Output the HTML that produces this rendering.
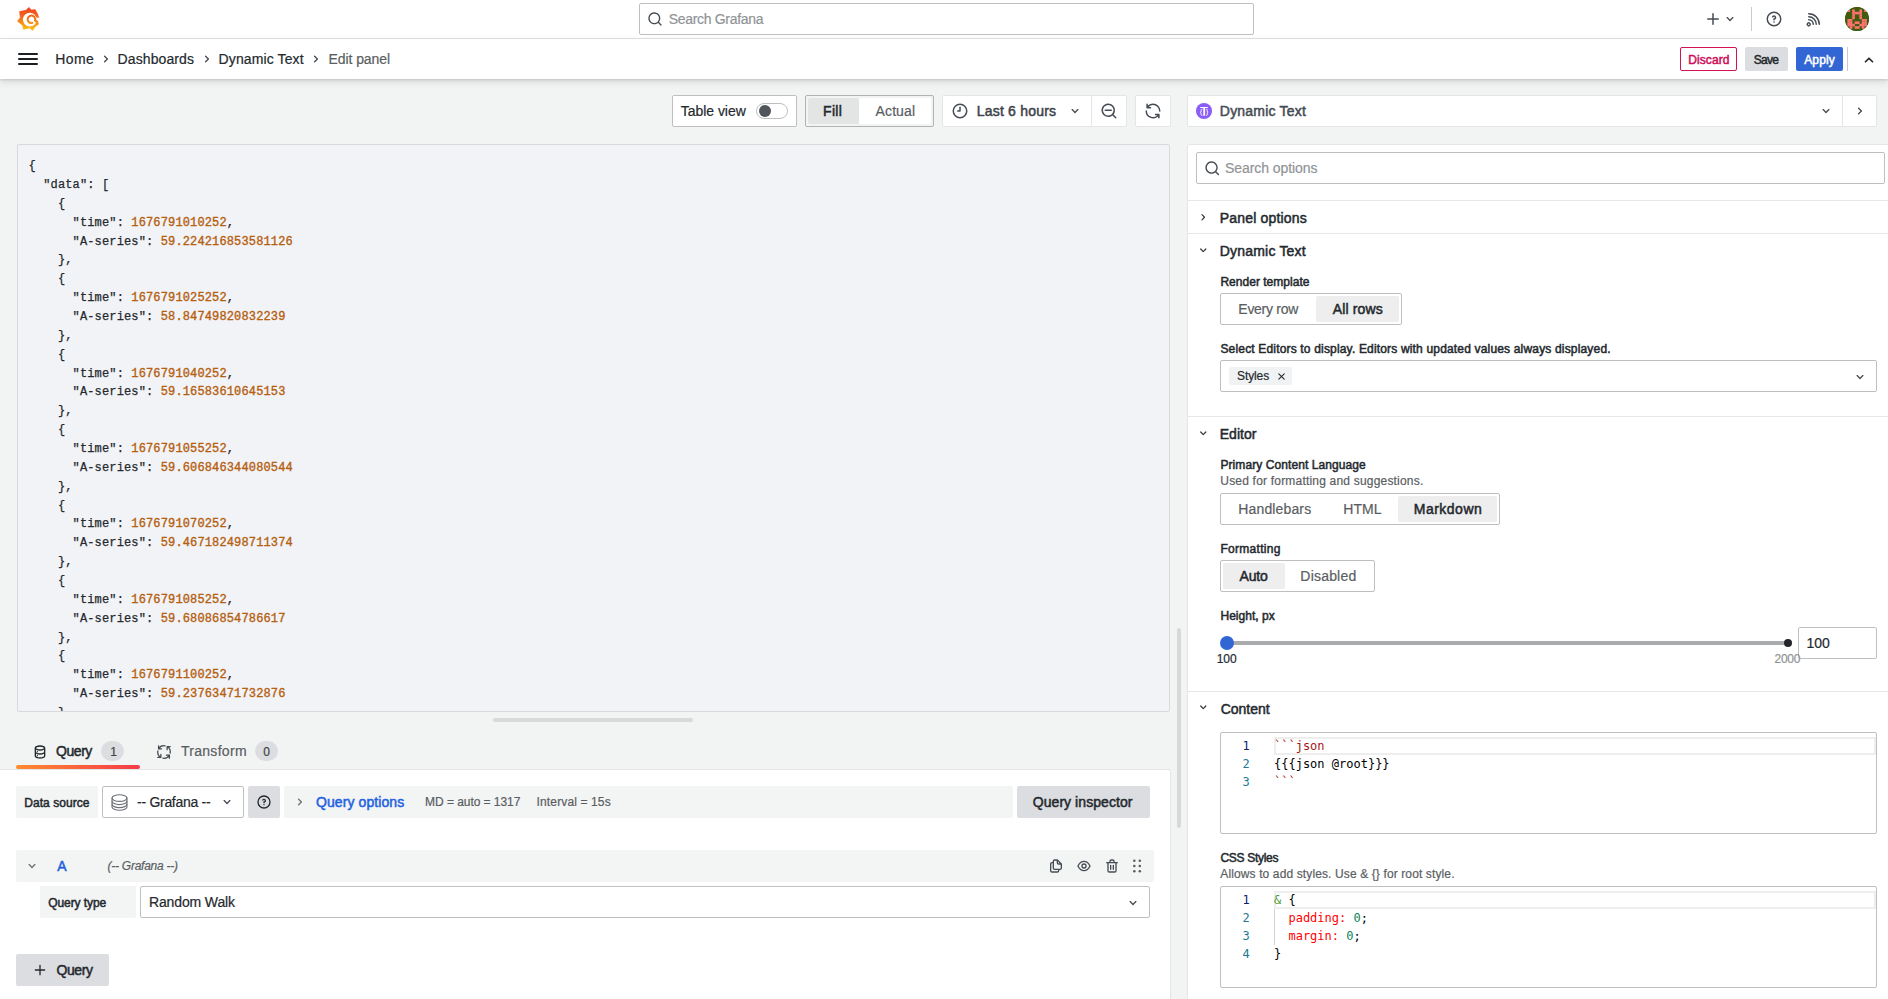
<!DOCTYPE html>
<html lang="en"><head><meta charset="utf-8"><title>Edit panel - Dynamic Text - Dashboards - Grafana</title>
<style>
html,body{margin:0;padding:0}
body{width:1888px;height:999px;overflow:hidden;position:relative;background:#f2f4f4;font-family:'Liberation Sans', sans-serif;color:#24292e}
.a{position:absolute;box-sizing:border-box}
.t{position:absolute;line-height:1;white-space:pre}
.ml{font-family:'Liberation Mono', monospace}
.md{font-family:'DejaVu Sans Mono', 'Liberation Mono', monospace}
svg{position:absolute;overflow:visible}
</style></head>
<body>
<div class="a" style="left:0px;top:0px;width:1888px;height:38px;background:#fff;"></div>
<div class="a" style="left:0px;top:38px;width:1888px;height:1px;background:#e2e3e4;"></div>
<div class="a" style="left:0px;top:39px;width:1888px;height:40px;background:#fff;box-shadow:0 1px 2px rgba(24,26,27,.13),0 3px 7px rgba(24,26,27,.12);"></div>
<svg style="left:16px;top:6px" width="24" height="26" viewBox="0 0 24 26" ><defs><linearGradient id="gl" gradientUnits="userSpaceOnUse" x1="0" y1="1" x2="0" y2="25"><stop offset="0" stop-color="#ee3b1f"/><stop offset=".45" stop-color="#f36f1a"/><stop offset="1" stop-color="#fcc90d"/></linearGradient></defs>
<path fill="url(#gl)" stroke="url(#gl)" stroke-width=".7" stroke-linejoin="round" d="M12.8,1.5 L15.4,3.9 L19.3,3.7 L20.4,5.8 Q22.1,8.2 22.6,11.4 L22.3,12 L21.3,14.8 L22.5,18.3 L19.6,20.2 L16.4,24.5 L13.7,21.8 L7.5,23.4 L6.7,19.4 L1.5,15.2 L4.3,11.6 L3.6,5.6 L10,4.3 Z"/>
<circle cx="13.8" cy="13.6" r="6.9" fill="#fff"/>
<path fill="#fff" d="M20.2,11.2 L23.6,12.3 L23.6,14.2 L20.9,14.9 Z"/>
<path fill="none" stroke="url(#gl)" stroke-width="2" stroke-linecap="round" stroke-linejoin="round" d="M21.3,15.6 L19,14.7 A3.8,3.8 0 1 0 14.7,17.1 L16.4,16.9"/></svg>
<div class="a" style="left:639px;top:3px;width:615px;height:32px;background:#fff;border:1px solid #bdbfc0;border-radius:2px;"></div>
<svg style="left:646.5px;top:10.5px" width="16" height="16" viewBox="0 0 24 24" ><path fill="#464c54" d="M21.71,20.29,18,16.61A9,9,0,1,0,16.61,18l3.68,3.68a1,1,0,0,0,1.42,0A1,1,0,0,0,21.71,20.29ZM11,18a7,7,0,1,1,7-7A7,7,0,0,1,11,18Z"/></svg>
<svg style="left:1704px;top:10px" width="18" height="18" viewBox="0 0 24 24" ><path fill="#464c54" d="M19,11H13V5a1,1,0,0,0-2,0v6H5a1,1,0,0,0,0,2h6v6a1,1,0,0,0,2,0V13h6a1,1,0,0,0,0-2Z"/></svg>
<svg style="left:1722px;top:11px" width="16" height="16" viewBox="0 0 24 24" ><path fill="#464c54" d="M17,9.17a1,1,0,0,0-1.41,0L12,12.71,8.46,9.17a1,1,0,0,0-1.41,0,1,1,0,0,0,0,1.42l4.24,4.24a1,1,0,0,0,1.42,0L17,10.59A1,1,0,0,0,17,9.17Z"/></svg>
<div class="a" style="left:1751px;top:7px;width:1px;height:24px;background:#c9cacb;"></div>
<svg style="left:1765px;top:10px" width="18" height="18" viewBox="0 0 24 24" ><path fill="#464c54" d="M11.29,15.29a1.58,1.58,0,0,0-.12.15.76.76,0,0,0-.09.18.64.64,0,0,0-.06.18,1.36,1.36,0,0,0,0,.2.84.84,0,0,0,.08.38.9.9,0,0,0,.54.54.94.94,0,0,0,.76,0,.9.9,0,0,0,.54-.54A1,1,0,0,0,13,16a1,1,0,0,0-.29-.71A1,1,0,0,0,11.29,15.29ZM12,2A10,10,0,1,0,22,12,10,10,0,0,0,12,2Zm0,18a8,8,0,1,1,8-8A8,8,0,0,1,12,20ZM12,7A3,3,0,0,0,9.4,8.5a1,1,0,1,0,1.73,1A1,1,0,0,1,12,9a1,1,0,0,1,0,2,1,1,0,0,0-1,1v1a1,1,0,0,0,2,0v-.18A3,3,0,0,0,12,7Z"/></svg>
<svg style="left:1804.9px;top:9.5px" width="18" height="18" viewBox="0 0 24 24" ><path fill="#464c54" d="M2.88,16.88a3,3,0,0,0,0,4.24,3,3,0,0,0,4.24,0,3,3,0,0,0-4.24-4.24Zm2.83,2.83a1,1,0,0,1-1.42-1.42,1,1,0,0,1,1.42,0A1,1,0,0,1,5.71,19.71ZM5,12a1,1,0,0,0,0,2,5,5,0,0,1,5,5,1,1,0,0,0,2,0,7,7,0,0,0-7-7ZM5,8a1,1,0,0,0,0,2,9,9,0,0,1,9,9,1,1,0,0,0,2,0,11.08,11.08,0,0,0-3.22-7.78A11.08,11.08,0,0,0,5,8Zm10.61.39A15.11,15.11,0,0,0,5,4,1,1,0,0,0,5,6,13,13,0,0,1,18,19a1,1,0,0,0,2,0A15.11,15.11,0,0,0,15.61,8.39Z"/></svg>
<svg style="left:1845px;top:7px" width="24" height="24" viewBox="0 0 24 24" ><defs><clipPath id="avc"><circle cx="12" cy="12" r="12"/></clipPath><filter id="avb" x="-5%" y="-5%" width="110%" height="110%"><feGaussianBlur stdDeviation="0.35"/></filter></defs><g clip-path="url(#avc)"><rect width="24" height="24" fill="#3f5c0b"/><g filter="url(#avb)"><rect x="-2" y="-2" width="28" height="28" fill="#3f5c0b"/><rect x="2.4" y="2.4" width="2.6" height="2.6" fill="#ff7272"/><rect x="7.2" y="2.4" width="2.6" height="2.6" fill="#ff7272"/><rect x="14.4" y="2.4" width="2.6" height="2.6" fill="#ff7272"/><rect x="19.2" y="2.4" width="2.6" height="2.6" fill="#ff7272"/><rect x="7.2" y="4.8" width="2.6" height="2.6" fill="#ff7272"/><rect x="9.6" y="4.8" width="2.6" height="2.6" fill="#ff7272"/><rect x="12.0" y="4.8" width="2.6" height="2.6" fill="#ff7272"/><rect x="14.4" y="4.8" width="2.6" height="2.6" fill="#ff7272"/><rect x="7.2" y="7.2" width="2.6" height="2.6" fill="#ff7272"/><rect x="14.4" y="7.2" width="2.6" height="2.6" fill="#ff7272"/><rect x="7.2" y="9.6" width="2.6" height="2.6" fill="#ff7272"/><rect x="14.4" y="9.6" width="2.6" height="2.6" fill="#ff7272"/><rect x="2.4" y="12.0" width="2.6" height="2.6" fill="#ff7272"/><rect x="4.8" y="12.0" width="2.6" height="2.6" fill="#ff7272"/><rect x="16.8" y="12.0" width="2.6" height="2.6" fill="#ff7272"/><rect x="19.2" y="12.0" width="2.6" height="2.6" fill="#ff7272"/><rect x="2.4" y="14.4" width="2.6" height="2.6" fill="#ff7272"/><rect x="4.8" y="14.4" width="2.6" height="2.6" fill="#ff7272"/><rect x="9.6" y="14.4" width="2.6" height="2.6" fill="#ff7272"/><rect x="12.0" y="14.4" width="2.6" height="2.6" fill="#ff7272"/><rect x="16.8" y="14.4" width="2.6" height="2.6" fill="#ff7272"/><rect x="19.2" y="14.4" width="2.6" height="2.6" fill="#ff7272"/><rect x="2.4" y="16.8" width="2.6" height="2.6" fill="#ff7272"/><rect x="4.8" y="16.8" width="2.6" height="2.6" fill="#ff7272"/><rect x="7.2" y="16.8" width="2.6" height="2.6" fill="#ff7272"/><rect x="14.4" y="16.8" width="2.6" height="2.6" fill="#ff7272"/><rect x="16.8" y="16.8" width="2.6" height="2.6" fill="#ff7272"/><rect x="19.2" y="16.8" width="2.6" height="2.6" fill="#ff7272"/><rect x="4.8" y="19.2" width="2.6" height="2.6" fill="#ff7272"/><rect x="9.6" y="19.2" width="2.6" height="2.6" fill="#ff7272"/><rect x="12.0" y="19.2" width="2.6" height="2.6" fill="#ff7272"/><rect x="16.8" y="19.2" width="2.6" height="2.6" fill="#ff7272"/></g></g></svg>
<svg style="left:16px;top:47.2px" width="24" height="24" viewBox="0 0 24 24" ><g fill="none" stroke="#1c2025" stroke-width="2" stroke-linecap="round" stroke-linejoin="round"><path d="M3,7h18M3,12h18M3,17h18"/></g></svg>
<svg style="left:98px;top:51px" width="16" height="16" viewBox="0 0 24 24" ><path fill="#464c54" d="M14.83,11.29,10.59,7.05a1,1,0,0,0-1.42,0,1,1,0,0,0,0,1.41L12.71,12,9.17,15.54a1,1,0,0,0,0,1.41,1,1,0,0,0,.71.29,1,1,0,0,0,.71-.29l4.24-4.24A1,1,0,0,0,14.83,11.29Z"/></svg>
<svg style="left:198.5px;top:51px" width="16" height="16" viewBox="0 0 24 24" ><path fill="#464c54" d="M14.83,11.29,10.59,7.05a1,1,0,0,0-1.42,0,1,1,0,0,0,0,1.41L12.71,12,9.17,15.54a1,1,0,0,0,0,1.41,1,1,0,0,0,.71.29,1,1,0,0,0,.71-.29l4.24-4.24A1,1,0,0,0,14.83,11.29Z"/></svg>
<svg style="left:308px;top:51px" width="16" height="16" viewBox="0 0 24 24" ><path fill="#464c54" d="M14.83,11.29,10.59,7.05a1,1,0,0,0-1.42,0,1,1,0,0,0,0,1.41L12.71,12,9.17,15.54a1,1,0,0,0,0,1.41,1,1,0,0,0,.71.29,1,1,0,0,0,.71-.29l4.24-4.24A1,1,0,0,0,14.83,11.29Z"/></svg>
<div class="a" style="left:1680px;top:47px;width:57px;height:24px;background:#fff;border:1px solid #d4124f;border-radius:2px;"></div>
<div class="a" style="left:1745px;top:47px;width:43px;height:24px;background:#dcdde0;border-radius:2px;"></div>
<div class="a" style="left:1796px;top:47px;width:47px;height:24px;background:#3266d5;border-radius:2px;"></div>
<div class="a" style="left:1847px;top:47px;width:1px;height:24px;background:#c9cacb;"></div>
<svg style="left:1859px;top:50px" width="20" height="20" viewBox="0 0 24 24" ><path fill="#24292e" d="M17,13.41,12.71,9.17a1,1,0,0,0-1.42,0L7.05,13.41a1,1,0,0,0,0,1.42,1,1,0,0,0,1.41,0L12,11.29l3.54,3.54a1,1,0,0,0,.7.29,1,1,0,0,0,.71-.29A1,1,0,0,0,17,13.41Z"/></svg>
<div class="a" style="left:672px;top:95px;width:125px;height:32px;background:#fff;border:1px solid #bdbfc0;border-radius:2px;"></div>
<div class="a" style="left:756px;top:103px;width:32px;height:16px;background:#fff;border:1px solid #bdbfc0;border-radius:8px;"></div>
<div class="a" style="left:759px;top:105px;width:12px;height:12px;background:#50555b;border-radius:6px;"></div>
<div class="a" style="left:805px;top:95px;width:129px;height:32px;background:#f2f4f4;border:1px solid #b0b2b4;border-radius:2px;"></div>
<div class="a" style="left:808px;top:98px;width:51px;height:26px;background:#e3e5e5;border-radius:2px;"></div>
<div class="a" style="left:859px;top:98px;width:72px;height:26px;background:#fff;border-radius:2px;"></div>
<div class="a" style="left:942px;top:95px;width:150px;height:32px;background:#fff;border:1px solid #e4e5e6;border-radius:2px;border-radius:2px 0 0 2px;"></div>
<svg style="left:950.8px;top:102px" width="18" height="18" viewBox="0 0 24 24" ><path fill="#464c54" d="M12,2A10,10,0,1,0,22,12,10.01114,10.01114,0,0,0,12,2Zm0,18a8,8,0,1,1,8-8A8.00917,8.00917,0,0,1,12,20ZM12,6a.99974.99974,0,0,0-1,1v4H9a1,1,0,0,0,0,2h3a.99974.99974,0,0,0,1-1V7A.99974.99974,0,0,0,12,6Z"/></svg>
<svg style="left:1067px;top:103px" width="16" height="16" viewBox="0 0 24 24" ><path fill="#464c54" d="M17,9.17a1,1,0,0,0-1.41,0L12,12.71,8.46,9.17a1,1,0,0,0-1.41,0,1,1,0,0,0,0,1.42l4.24,4.24a1,1,0,0,0,1.42,0L17,10.59A1,1,0,0,0,17,9.17Z"/></svg>
<div class="a" style="left:1091px;top:95px;width:36px;height:32px;background:#fff;border:1px solid #e4e5e6;border-radius:2px;border-radius:0 2px 2px 0;"></div>
<svg style="left:1100px;top:102px" width="18" height="18" viewBox="0 0 24 24" ><path fill="#464c54" d="M21.71,20.29,18,16.61A9,9,0,1,0,16.61,18l3.68,3.68a1,1,0,0,0,1.42,0A1,1,0,0,0,21.71,20.29ZM11,18a7,7,0,1,1,7-7A7,7,0,0,1,11,18Zm4-8H7a1,1,0,0,0,0,2h8a1,1,0,0,0,0-2Z"/></svg>
<div class="a" style="left:1135px;top:95px;width:36px;height:32px;background:#fff;border:1px solid #e4e5e6;border-radius:2px;"></div>
<svg style="left:1144.1px;top:101.85px" width="18" height="18" viewBox="0 0 24 24" ><path fill="#464c54" d="M19.91,15.51H15.38a1,1,0,0,0,0,2h2.4A8,8,0,0,1,4,12a1,1,0,0,0-2,0,10,10,0,0,0,16.88,7.23V21a1,1,0,0,0,2,0V16.5A1,1,0,0,0,19.91,15.51ZM12,2A10,10,0,0,0,5.12,4.77V3a1,1,0,0,0-2,0V7.5a1,1,0,0,0,1,1h4.5a1,1,0,0,0,0-2H6.22A8,8,0,0,1,20,12a1,1,0,0,0,2,0A10,10,0,0,0,12,2Z"/></svg>
<div class="a" style="left:1187px;top:95px;width:656px;height:32px;background:#fff;border:1px solid #e4e5e6;border-radius:2px;border-radius:2px 0 0 2px;"></div>
<svg style="left:1196px;top:103px" width="16" height="16" viewBox="0 0 16 16" ><circle cx="8" cy="8" r="8.05" fill="#8b5cf6"/><path fill="#fff" d="M4.2,3.9h7.7v1.15h-2.8v7.75h-1.8v-7.75h-3.1z"/><g fill="none" stroke="#fff" stroke-width=".95" stroke-linecap="round" stroke-linejoin="round"><path d="M5.9,6.3c-.7,0-.8.4-.8,1v1c0,.6-.3.9-.8,1 .5.1.8.4.8,1v1c0,.6.1,1,.8,1"/><path d="M10.5,6.3c.7,0,.8.4.8,1v1c0,.6.3.9.8,1-.5.1-.8.4-.8,1v1c0,.6-.1,1-.8,1"/></g></svg>
<svg style="left:1818px;top:103px" width="16" height="16" viewBox="0 0 24 24" ><path fill="#464c54" d="M17,9.17a1,1,0,0,0-1.41,0L12,12.71,8.46,9.17a1,1,0,0,0-1.41,0,1,1,0,0,0,0,1.42l4.24,4.24a1,1,0,0,0,1.42,0L17,10.59A1,1,0,0,0,17,9.17Z"/></svg>
<div class="a" style="left:1842px;top:95px;width:35px;height:32px;background:#fff;border:1px solid #e4e5e6;border-radius:2px;border-radius:0 2px 2px 0;"></div>
<svg style="left:1852px;top:103px" width="16" height="16" viewBox="0 0 24 24" ><path fill="#464c54" d="M14.83,11.29,10.59,7.05a1,1,0,0,0-1.42,0,1,1,0,0,0,0,1.41L12.71,12,9.17,15.54a1,1,0,0,0,0,1.41,1,1,0,0,0,.71.29,1,1,0,0,0,.71-.29l4.24-4.24A1,1,0,0,0,14.83,11.29Z"/></svg>
<div class="a" style="left:17px;top:144px;width:1153px;height:568px;background:#f2f3f7;border:1px solid #d8d9dc;border-radius:2px;overflow:hidden;"><pre style="position:absolute;margin:0;left:10.559999999999999px;top:12.099999999999994px;font:12px/18.857px 'Liberation Mono', monospace;letter-spacing:.14px;-webkit-text-stroke:.25px;color:#24292e">{
  &quot;data&quot;: [
    {
      &quot;time&quot;: <span style="color:#b5600f;-webkit-text-stroke:.35px">1676791010252</span>,
      &quot;A-series&quot;: <span style="color:#b5600f;-webkit-text-stroke:.35px">59.224216853581126</span>
    },
    {
      &quot;time&quot;: <span style="color:#b5600f;-webkit-text-stroke:.35px">1676791025252</span>,
      &quot;A-series&quot;: <span style="color:#b5600f;-webkit-text-stroke:.35px">58.84749820832239</span>
    },
    {
      &quot;time&quot;: <span style="color:#b5600f;-webkit-text-stroke:.35px">1676791040252</span>,
      &quot;A-series&quot;: <span style="color:#b5600f;-webkit-text-stroke:.35px">59.16583610645153</span>
    },
    {
      &quot;time&quot;: <span style="color:#b5600f;-webkit-text-stroke:.35px">1676791055252</span>,
      &quot;A-series&quot;: <span style="color:#b5600f;-webkit-text-stroke:.35px">59.606846344080544</span>
    },
    {
      &quot;time&quot;: <span style="color:#b5600f;-webkit-text-stroke:.35px">1676791070252</span>,
      &quot;A-series&quot;: <span style="color:#b5600f;-webkit-text-stroke:.35px">59.467182498711374</span>
    },
    {
      &quot;time&quot;: <span style="color:#b5600f;-webkit-text-stroke:.35px">1676791085252</span>,
      &quot;A-series&quot;: <span style="color:#b5600f;-webkit-text-stroke:.35px">59.68086854786617</span>
    },
    {
      &quot;time&quot;: <span style="color:#b5600f;-webkit-text-stroke:.35px">1676791100252</span>,
      &quot;A-series&quot;: <span style="color:#b5600f;-webkit-text-stroke:.35px">59.23763471732876</span>
    },</pre></div>
<div class="a" style="left:493px;top:718px;width:200px;height:4px;background:#d8d9db;border-radius:2px;"></div>
<div class="a" style="left:1177px;top:628px;width:4px;height:200px;background:#d7d8da;border-radius:2px;"></div>
<div class="a" style="left:0px;top:769px;width:1170px;height:1px;background:#e4e5e6;"></div>
<div class="a" style="left:0px;top:770px;width:1171px;height:229px;background:#fff;border-right:1px solid #e4e5e6;border-radius:0 3px 0 0;"></div>
<div class="a" style="left:16px;top:765px;width:124px;height:4px;border-radius:2px;background:linear-gradient(90deg,#ff8b2e 0%,#f43b4a 100%);"></div>
<svg style="left:32.2px;top:743.7px" width="16" height="16" viewBox="0 0 24 24" ><path fill="#24292e" d="M8,16.5a1,1,0,1,0,1,1A1,1,0,0,0,8,16.5ZM12,2C8,2,4,3.37,4,6V18c0,2.63,4,4,8,4s8-1.37,8-4V6C20,3.37,16,2,12,2Zm6,16c0,.71-2.28,2-6,2s-6-1.29-6-2V14.73A13.16,13.16,0,0,0,12,16a13.16,13.16,0,0,0,6-1.27Zm0-6c0,.71-2.28,2-6,2s-6-1.29-6-2V8.73A13.16,13.16,0,0,0,12,10a13.16,13.16,0,0,0,6-1.27ZM12,8C8.28,8,6,6.71,6,6s2.28-2,6-2,6,1.29,6,2S15.72,8,12,8ZM8,10.5a1,1,0,1,0,1,1A1,1,0,0,0,8,10.5Z"/></svg>
<div class="a" style="left:101px;top:741px;width:23px;height:20px;background:#dcdde0;border-radius:10px;"></div>
<svg style="left:156px;top:743.8px" width="16" height="16" viewBox="0 0 24 24" ><g fill="none" stroke="#464c54" stroke-width="1.9" stroke-linecap="round" stroke-linejoin="round"><g transform="rotate(0 12 12)"><path d="M13.63,2.74A9.4,9.4 0 0 0 3.86,7.3M3.86,2.7V7.3H8.46"/></g><g transform="rotate(-90 12 12)"><path d="M13.63,2.74A9.4,9.4 0 0 0 3.86,7.3M3.86,2.7V7.3H8.46"/></g><g transform="rotate(-180 12 12)"><path d="M13.63,2.74A9.4,9.4 0 0 0 3.86,7.3M3.86,2.7V7.3H8.46"/></g><g transform="rotate(-270 12 12)"><path d="M13.63,2.74A9.4,9.4 0 0 0 3.86,7.3M3.86,2.7V7.3H8.46"/></g></g></svg>
<div class="a" style="left:255px;top:741px;width:23px;height:20px;background:#dcdde0;border-radius:10px;"></div>
<div class="a" style="left:16px;top:786px;width:82px;height:32px;background:#f3f4f4;border-radius:2px;"></div>
<div class="a" style="left:102px;top:786px;width:142px;height:32px;background:#fff;border:1px solid #bdbfc0;border-radius:2px;"></div>
<svg style="left:110.1px;top:793.3px" width="19" height="19" viewBox="0 0 24 24" ><g fill="none" stroke="#6e7277" stroke-width="1.5" stroke-linecap="round" stroke-linejoin="round"><ellipse cx="12" cy="6.4" rx="9.4" ry="4.2"/><path d="M2.6,6.4v11.2c0,2.3 4.2,4.2 9.4,4.2s9.4-1.9 9.4-4.2V6.4"/><path d="M2.6,10.4c0,2.3 4.2,4.2 9.4,4.2s9.4-1.9 9.4-4.2"/><path d="M2.6,14.2c0,2.3 4.2,4.2 9.4,4.2s9.4-1.9 9.4-4.2"/></g></svg>
<svg style="left:219px;top:794px" width="16" height="16" viewBox="0 0 24 24" ><path fill="#464c54" d="M17,9.17a1,1,0,0,0-1.41,0L12,12.71,8.46,9.17a1,1,0,0,0-1.41,0,1,1,0,0,0,0,1.42l4.24,4.24a1,1,0,0,0,1.42,0L17,10.59A1,1,0,0,0,17,9.17Z"/></svg>
<div class="a" style="left:248px;top:786px;width:32px;height:32px;background:#dcdde0;border-radius:2px;"></div>
<svg style="left:256px;top:794px" width="16" height="16" viewBox="0 0 24 24" ><path fill="#24292e" d="M11.29,15.29a1.58,1.58,0,0,0-.12.15.76.76,0,0,0-.09.18.64.64,0,0,0-.06.18,1.36,1.36,0,0,0,0,.2.84.84,0,0,0,.08.38.9.9,0,0,0,.54.54.94.94,0,0,0,.76,0,.9.9,0,0,0,.54-.54A1,1,0,0,0,13,16a1,1,0,0,0-.29-.71A1,1,0,0,0,11.29,15.29ZM12,2A10,10,0,1,0,22,12,10,10,0,0,0,12,2Zm0,18a8,8,0,1,1,8-8A8,8,0,0,1,12,20ZM12,7A3,3,0,0,0,9.4,8.5a1,1,0,1,0,1.73,1A1,1,0,0,1,12,9a1,1,0,0,1,0,2,1,1,0,0,0-1,1v1a1,1,0,0,0,2,0v-.18A3,3,0,0,0,12,7Z"/></svg>
<div class="a" style="left:284px;top:786px;width:729px;height:32px;background:#f3f4f4;border-radius:2px;"></div>
<svg style="left:292px;top:794px" width="16" height="16" viewBox="0 0 24 24" ><path fill="#6e7378" d="M14.83,11.29,10.59,7.05a1,1,0,0,0-1.42,0,1,1,0,0,0,0,1.41L12.71,12,9.17,15.54a1,1,0,0,0,0,1.41,1,1,0,0,0,.71.29,1,1,0,0,0,.71-.29l4.24-4.24A1,1,0,0,0,14.83,11.29Z"/></svg>
<div class="a" style="left:1017px;top:786px;width:133px;height:32px;background:#dcdde0;border-radius:2px;"></div>
<div class="a" style="left:16px;top:850px;width:1138px;height:32px;background:#f3f4f4;border-radius:2px;"></div>
<svg style="left:24px;top:858px" width="16" height="16" viewBox="0 0 24 24" ><path fill="#6e7378" d="M17,9.17a1,1,0,0,0-1.41,0L12,12.71,8.46,9.17a1,1,0,0,0-1.41,0,1,1,0,0,0,0,1.42l4.24,4.24a1,1,0,0,0,1.42,0L17,10.59A1,1,0,0,0,17,9.17Z"/></svg>
<svg style="left:1048px;top:858px" width="16" height="16" viewBox="0 0 24 24" ><path fill="#464c54" d="M21,8.94a1.31,1.31,0,0,0-.06-.27l0-.09a1.07,1.07,0,0,0-.19-.28h0l-6-6h0a1.07,1.07,0,0,0-.28-.19.32.32,0,0,0-.09,0A.88.88,0,0,0,14.05,2H10A3,3,0,0,0,7,5V6H6A3,3,0,0,0,3,9V19a3,3,0,0,0,3,3h8a3,3,0,0,0,3-3V18h1a3,3,0,0,0,3-3V9S21,9,21,8.94ZM15,5.41,17.59,8H16a1,1,0,0,1-1-1ZM15,19a1,1,0,0,1-1,1H6a1,1,0,0,1-1-1V9A1,1,0,0,1,6,8H7v7a3,3,0,0,0,3,3h5Zm4-4a1,1,0,0,1-1,1H10a1,1,0,0,1-1-1V5a1,1,0,0,1,1-1h3V7a3,3,0,0,0,3,3h3Z"/></svg>
<svg style="left:1076px;top:858px" width="16" height="16" viewBox="0 0 24 24" ><path fill="#464c54" d="M21.92,11.6C19.9,6.91,16.1,4,12,4S4.1,6.91,2.08,11.6a1,1,0,0,0,0,.8C4.1,17.09,7.9,20,12,20s7.9-2.91,9.92-7.6A1,1,0,0,0,21.92,11.6ZM12,18c-3.17,0-6.17-2.29-7.9-6C5.83,8.29,8.83,6,12,6s6.17,2.29,7.9,6C18.17,15.71,15.17,18,12,18ZM12,8a4,4,0,1,0,4,4A4,4,0,0,0,12,8Zm0,6a2,2,0,1,1,2-2A2,2,0,0,1,12,14Z"/></svg>
<svg style="left:1104px;top:858px" width="16" height="16" viewBox="0 0 24 24" ><path fill="#464c54" d="M10,18a1,1,0,0,0,1-1V11a1,1,0,0,0-2,0v6A1,1,0,0,0,10,18ZM20,6H16V5a3,3,0,0,0-3-3H11A3,3,0,0,0,8,5V6H4A1,1,0,0,0,4,8H5V19a3,3,0,0,0,3,3h8a3,3,0,0,0,3-3V8h1a1,1,0,0,0,0-2ZM10,5a1,1,0,0,1,1-1h2a1,1,0,0,1,1,1V6H10Zm7,14a1,1,0,0,1-1,1H8a1,1,0,0,1-1-1V8H17Zm-3-1a1,1,0,0,0,1-1V11a1,1,0,0,0-2,0v6A1,1,0,0,0,14,18Z"/></svg>
<svg style="left:1129px;top:858px" width="16" height="16" viewBox="0 0 24 24" ><g fill="#5a5e62"><circle cx="8" cy="4.2" r="1.9"/><circle cx="16.2" cy="4.2" r="1.9"/><circle cx="8" cy="12" r="1.9"/><circle cx="16.2" cy="12" r="1.9"/><circle cx="8" cy="19.8" r="1.9"/><circle cx="16.2" cy="19.8" r="1.9"/></g></svg>
<div class="a" style="left:40px;top:886px;width:96px;height:32px;background:#f3f4f4;border-radius:2px;"></div>
<div class="a" style="left:140px;top:886px;width:1010px;height:32px;background:#fff;border:1px solid #bdbfc0;border-radius:2px;"></div>
<svg style="left:1125px;top:895px" width="16" height="16" viewBox="0 0 24 24" ><path fill="#464c54" d="M17,9.17a1,1,0,0,0-1.41,0L12,12.71,8.46,9.17a1,1,0,0,0-1.41,0,1,1,0,0,0,0,1.42l4.24,4.24a1,1,0,0,0,1.42,0L17,10.59A1,1,0,0,0,17,9.17Z"/></svg>
<div class="a" style="left:16px;top:954px;width:93px;height:32px;background:#dcdde0;border-radius:2px;"></div>
<svg style="left:32px;top:962px" width="16" height="16" viewBox="0 0 24 24" ><path fill="#24292e" d="M19,11H13V5a1,1,0,0,0-2,0v6H5a1,1,0,0,0,0,2h6v6a1,1,0,0,0,2,0V13h6a1,1,0,0,0,0-2Z"/></svg>
<div class="a" style="left:1187px;top:144px;width:702px;height:860px;background:#fff;border:1px solid #e4e5e6;border-radius:3px 0 0 0;"></div>
<div class="a" style="left:1196px;top:152px;width:689px;height:32px;background:#fff;border:1px solid #bdbfc0;border-radius:2px;"></div>
<svg style="left:1203.5px;top:159.5px" width="16.5" height="16.5" viewBox="0 0 24 24" ><path fill="#464c54" d="M21.71,20.29,18,16.61A9,9,0,1,0,16.61,18l3.68,3.68a1,1,0,0,0,1.42,0A1,1,0,0,0,21.71,20.29ZM11,18a7,7,0,1,1,7-7A7,7,0,0,1,11,18Z"/></svg>
<div class="a" style="left:1188px;top:200px;width:700px;height:1px;background:#e6e7e8;"></div>
<svg style="left:1195.75px;top:209.85px" width="14.5" height="14.5" viewBox="0 0 24 24" ><path fill="#33383e" d="M14.83,11.29,10.59,7.05a1,1,0,0,0-1.42,0,1,1,0,0,0,0,1.41L12.71,12,9.17,15.54a1,1,0,0,0,0,1.41,1,1,0,0,0,.71.29,1,1,0,0,0,.71-.29l4.24-4.24A1,1,0,0,0,14.83,11.29Z"/></svg>
<div class="a" style="left:1188px;top:233px;width:700px;height:1px;background:#e6e7e8;"></div>
<svg style="left:1195.75px;top:242.9px" width="14.5" height="14.5" viewBox="0 0 24 24" ><path fill="#33383e" d="M17,9.17a1,1,0,0,0-1.41,0L12,12.71,8.46,9.17a1,1,0,0,0-1.41,0,1,1,0,0,0,0,1.42l4.24,4.24a1,1,0,0,0,1.42,0L17,10.59A1,1,0,0,0,17,9.17Z"/></svg>
<div class="a" style="left:1220px;top:293px;width:182px;height:32px;background:#fff;border:1px solid #bdbfc0;border-radius:2px;"></div>
<div class="a" style="left:1316px;top:296px;width:83px;height:26px;background:#eeeeef;border-radius:2px;"></div>
<div class="a" style="left:1220px;top:360px;width:657px;height:32px;background:#fff;border:1px solid #bdbfc0;border-radius:2px;"></div>
<div class="a" style="left:1229px;top:367px;width:63px;height:18px;background:#f1f2f3;border-radius:2px;"></div>
<svg style="left:1274.5px;top:369.5px" width="13" height="13" viewBox="0 0 24 24" ><path fill="#24292e" d="M13.41,12l4.3-4.29a1,1,0,1,0-1.42-1.42L12,10.59,7.71,6.29A1,1,0,0,0,6.29,7.71L10.59,12l-4.3,4.29a1,1,0,0,0,0,1.42,1,1,0,0,0,1.42,0L12,13.41l4.29,4.3a1,1,0,0,0,1.42,0,1,1,0,0,0,0-1.42Z"/></svg>
<svg style="left:1852px;top:369px" width="16" height="16" viewBox="0 0 24 24" ><path fill="#464c54" d="M17,9.17a1,1,0,0,0-1.41,0L12,12.71,8.46,9.17a1,1,0,0,0-1.41,0,1,1,0,0,0,0,1.42l4.24,4.24a1,1,0,0,0,1.42,0L17,10.59A1,1,0,0,0,17,9.17Z"/></svg>
<div class="a" style="left:1188px;top:416px;width:700px;height:1px;background:#e6e7e8;"></div>
<svg style="left:1195.75px;top:425.9px" width="14.5" height="14.5" viewBox="0 0 24 24" ><path fill="#33383e" d="M17,9.17a1,1,0,0,0-1.41,0L12,12.71,8.46,9.17a1,1,0,0,0-1.41,0,1,1,0,0,0,0,1.42l4.24,4.24a1,1,0,0,0,1.42,0L17,10.59A1,1,0,0,0,17,9.17Z"/></svg>
<div class="a" style="left:1220px;top:493px;width:280px;height:32px;background:#fff;border:1px solid #bdbfc0;border-radius:2px;"></div>
<div class="a" style="left:1398px;top:496px;width:99px;height:26px;background:#eeeeef;border-radius:2px;"></div>
<div class="a" style="left:1220px;top:560px;width:155px;height:32px;background:#fff;border:1px solid #bdbfc0;border-radius:2px;"></div>
<div class="a" style="left:1223px;top:563px;width:62px;height:26px;background:#eeeeef;border-radius:2px;"></div>
<div class="a" style="left:1227px;top:641px;width:561px;height:4px;background:#a9abad;border-radius:2px;"></div>
<div class="a" style="left:1784px;top:639px;width:8px;height:8px;background:#22252b;border-radius:4px;"></div>
<div class="a" style="left:1220px;top:636px;width:14px;height:14px;background:#3266d5;border-radius:7px;"></div>
<div class="a" style="left:1798px;top:627px;width:79px;height:32px;background:#fff;border:1px solid #bdbfc0;border-radius:2px;"></div>
<div class="a" style="left:1188px;top:691px;width:700px;height:1px;background:#e6e7e8;"></div>
<svg style="left:1195.75px;top:700.3px" width="14.5" height="14.5" viewBox="0 0 24 24" ><path fill="#33383e" d="M17,9.17a1,1,0,0,0-1.41,0L12,12.71,8.46,9.17a1,1,0,0,0-1.41,0,1,1,0,0,0,0,1.42l4.24,4.24a1,1,0,0,0,1.42,0L17,10.59A1,1,0,0,0,17,9.17Z"/></svg>
<div class="a" style="left:1220px;top:732px;width:657px;height:102px;background:#fff;border:1px solid #bdbfc0;border-radius:2px;"></div>
<div class="a" style="left:1274px;top:737px;width:602px;height:18px;background:#fff;border:2px solid #eeeeee;"></div>
<div class="a" style="left:1220px;top:886px;width:657px;height:102px;background:#fff;border:1px solid #bdbfc0;border-radius:2px;"></div>
<div class="a" style="left:1274px;top:891px;width:602px;height:18px;background:#fff;border:2px solid #eeeeee;"></div>
<div class="a" style="left:1274px;top:909px;width:1px;height:36px;background:#d3d3d3;"></div>
<span class="t" style="left:668.85px;top:12px;font-size:14px;color:#919496;-webkit-text-stroke:0.2px;letter-spacing:-0.327px;">Search Grafana</span>
<span class="t" style="left:55.35px;top:52px;font-size:14px;color:#24292e;-webkit-text-stroke:0.2px;letter-spacing:0.330px;">Home</span>
<span class="t" style="left:117.60px;top:52px;font-size:14px;color:#24292e;-webkit-text-stroke:0.2px;letter-spacing:0.090px;">Dashboards</span>
<span class="t" style="left:218.60px;top:52px;font-size:14px;color:#24292e;-webkit-text-stroke:0.2px;letter-spacing:0.106px;">Dynamic Text</span>
<span class="t" style="left:328.60px;top:52px;font-size:14px;color:#5a5e62;-webkit-text-stroke:0.2px;letter-spacing:-0.095px;">Edit panel</span>
<span class="t" style="left:1688.25px;top:54px;font-size:12px;color:#cf0e5b;-webkit-text-stroke:0.5px #cf0e5b;letter-spacing:0.083px;">Discard</span>
<span class="t" style="left:1753.85px;top:54px;font-size:12px;color:#24292e;-webkit-text-stroke:0.5px #24292e;letter-spacing:-0.759px;">Save</span>
<span class="t" style="left:1804.25px;top:54px;font-size:12px;color:#fff;-webkit-text-stroke:0.5px #fff;letter-spacing:0.121px;">Apply</span>
<span class="t" style="left:680.85px;top:104px;font-size:14px;color:#24292e;-webkit-text-stroke:0.2px;letter-spacing:-0.051px;">Table view</span>
<span class="t" style="left:823.00px;top:104px;font-size:14px;color:#24292e;-webkit-text-stroke:0.5px #24292e;letter-spacing:0.326px;">Fill</span>
<span class="t" style="left:875.60px;top:104px;font-size:14px;color:#5a5e62;-webkit-text-stroke:0.2px;letter-spacing:0.100px;">Actual</span>
<span class="t" style="left:976.75px;top:104px;font-size:14px;color:#3d434a;-webkit-text-stroke:0.5px #3d434a;letter-spacing:0.200px;">Last 6 hours</span>
<span class="t" style="left:1219.85px;top:104px;font-size:14px;color:#464c54;-webkit-text-stroke:0.5px #464c54;letter-spacing:0.206px;">Dynamic Text</span>
<span class="t" style="left:56.05px;top:744px;font-size:14px;color:#24292e;-webkit-text-stroke:0.5px #24292e;letter-spacing:-0.456px;">Query</span>
<span class="t" style="left:110.30px;top:746px;font-size:12px;color:#3d434a;-webkit-text-stroke:0.2px;">1</span>
<span class="t" style="left:180.90px;top:744px;font-size:14px;color:#5a5e62;-webkit-text-stroke:0.2px;letter-spacing:0.299px;">Transform</span>
<span class="t" style="left:263.20px;top:746px;font-size:12px;color:#3d434a;-webkit-text-stroke:0.2px;">0</span>
<span class="t" style="left:24.25px;top:797px;font-size:12px;color:#24292e;-webkit-text-stroke:0.5px #24292e;letter-spacing:0.047px;">Data source</span>
<span class="t" style="left:137.10px;top:795px;font-size:14px;color:#24292e;-webkit-text-stroke:0.2px;letter-spacing:-0.296px;">-- Grafana --</span>
<span class="t" style="left:316.00px;top:795px;font-size:14px;color:#1f62e0;-webkit-text-stroke:0.5px #1f62e0;letter-spacing:0.091px;">Query options</span>
<span class="t" style="left:425.10px;top:796px;font-size:12px;color:#5a5e62;-webkit-text-stroke:0.2px;letter-spacing:-0.056px;">MD = auto = 1317</span>
<span class="t" style="left:536.60px;top:796px;font-size:12px;color:#5a5e62;-webkit-text-stroke:0.2px;letter-spacing:0.129px;">Interval = 15s</span>
<span class="t" style="left:1032.75px;top:795px;font-size:14px;color:#24292e;-webkit-text-stroke:0.5px #24292e;letter-spacing:0.060px;">Query inspector</span>
<span class="t" style="left:57.25px;top:859px;font-size:14px;color:#1f62e0;-webkit-text-stroke:0.5px #1f62e0;">A</span>
<span class="t" style="left:107.60px;top:860px;font-size:12px;color:#5a5e62;-webkit-text-stroke:0.2px;font-style:italic;letter-spacing:-0.265px;">(-- Grafana --)</span>
<span class="t" style="left:48.25px;top:897px;font-size:12px;color:#24292e;-webkit-text-stroke:0.5px #24292e;letter-spacing:-0.080px;">Query type</span>
<span class="t" style="left:148.90px;top:895px;font-size:14px;color:#24292e;-webkit-text-stroke:0.2px;letter-spacing:-0.120px;">Random Walk</span>
<span class="t" style="left:56.55px;top:963px;font-size:14px;color:#24292e;-webkit-text-stroke:0.5px #24292e;letter-spacing:-0.431px;">Query</span>
<span class="t" style="left:1225.10px;top:161px;font-size:14px;color:#919496;-webkit-text-stroke:0.2px;letter-spacing:-0.084px;">Search options</span>
<span class="t" style="left:1219.75px;top:211px;font-size:14px;color:#24292e;-webkit-text-stroke:0.5px #24292e;letter-spacing:0.180px;">Panel options</span>
<span class="t" style="left:1219.75px;top:244px;font-size:14px;color:#24292e;-webkit-text-stroke:0.5px #24292e;letter-spacing:0.197px;">Dynamic Text</span>
<span class="t" style="left:1220.45px;top:276px;font-size:12px;color:#24292e;-webkit-text-stroke:0.5px #24292e;letter-spacing:0.018px;">Render template</span>
<span class="t" style="left:1238.35px;top:302px;font-size:14px;color:#5a5e62;-webkit-text-stroke:0.2px;letter-spacing:-0.291px;">Every row</span>
<span class="t" style="left:1332.75px;top:302px;font-size:14px;color:#24292e;-webkit-text-stroke:0.5px #24292e;letter-spacing:0.142px;">All rows</span>
<span class="t" style="left:1220.45px;top:343px;font-size:12px;color:#24292e;-webkit-text-stroke:0.5px #24292e;letter-spacing:0.171px;">Select Editors to display. Editors with updated values always displayed.</span>
<span class="t" style="left:1237.10px;top:370px;font-size:12px;color:#24292e;-webkit-text-stroke:0.2px;letter-spacing:-0.126px;">Styles</span>
<span class="t" style="left:1219.75px;top:427px;font-size:14px;color:#24292e;-webkit-text-stroke:0.5px #24292e;letter-spacing:0.018px;">Editor</span>
<span class="t" style="left:1220.45px;top:459px;font-size:12px;color:#24292e;-webkit-text-stroke:0.5px #24292e;letter-spacing:0.078px;">Primary Content Language</span>
<span class="t" style="left:1220.30px;top:475px;font-size:12px;color:#5a5e62;-webkit-text-stroke:0.2px;letter-spacing:0.195px;">Used for formatting and suggestions.</span>
<span class="t" style="left:1238.35px;top:502px;font-size:14px;color:#5a5e62;-webkit-text-stroke:0.2px;letter-spacing:0.133px;">Handlebars</span>
<span class="t" style="left:1343.35px;top:502px;font-size:14px;color:#5a5e62;-webkit-text-stroke:0.2px;letter-spacing:-0.008px;">HTML</span>
<span class="t" style="left:1413.75px;top:502px;font-size:14px;color:#24292e;-webkit-text-stroke:0.5px #24292e;letter-spacing:0.494px;">Markdown</span>
<span class="t" style="left:1220.45px;top:543px;font-size:12px;color:#24292e;-webkit-text-stroke:0.5px #24292e;letter-spacing:0.291px;">Formatting</span>
<span class="t" style="left:1239.50px;top:569px;font-size:14px;color:#24292e;-webkit-text-stroke:0.5px #24292e;letter-spacing:-0.171px;">Auto</span>
<span class="t" style="left:1300.35px;top:569px;font-size:14px;color:#5a5e62;-webkit-text-stroke:0.2px;letter-spacing:0.194px;">Disabled</span>
<span class="t" style="left:1220.45px;top:610px;font-size:12px;color:#24292e;-webkit-text-stroke:0.5px #24292e;letter-spacing:0.030px;">Height, px</span>
<span class="t" style="left:1216.85px;top:653px;font-size:12px;color:#24292e;-webkit-text-stroke:0.2px;letter-spacing:-0.149px;">100</span>
<span class="t" style="left:1774.60px;top:653px;font-size:12px;color:#919496;-webkit-text-stroke:0.2px;letter-spacing:-0.324px;">2000</span>
<span class="t" style="left:1806.50px;top:636px;font-size:14px;color:#24292e;-webkit-text-stroke:0.2px;letter-spacing:-0.086px;">100</span>
<span class="t" style="left:1220.75px;top:702px;font-size:14px;color:#24292e;-webkit-text-stroke:0.5px #24292e;letter-spacing:-0.024px;">Content</span>
<span class="t md" style="left:1242.40px;top:740px;font-size:12px;color:#0b216f;">1</span>
<span class="t md" style="left:1274.00px;top:740px;font-size:12px;color:#a31515;">```json</span>
<span class="t md" style="left:1242.40px;top:758px;font-size:12px;color:#237893;">2</span>
<span class="t md" style="left:1274.00px;top:758px;font-size:12px;color:#000;">{{{json @root}}}</span>
<span class="t md" style="left:1242.40px;top:776px;font-size:12px;color:#237893;">3</span>
<span class="t md" style="left:1274.00px;top:776px;font-size:12px;color:#a31515;">```</span>
<span class="t" style="left:1220.45px;top:852px;font-size:12px;color:#24292e;-webkit-text-stroke:0.5px #24292e;letter-spacing:-0.293px;">CSS Styles</span>
<span class="t" style="left:1220.30px;top:868px;font-size:12px;color:#5a5e62;-webkit-text-stroke:0.2px;letter-spacing:0.120px;">Allows to add styles. Use &amp; {} for root style.</span>
<span class="t md" style="left:1242.40px;top:894px;font-size:12px;color:#0b216f;">1</span>
<span class="t md" style="left:1274.00px;top:894px;font-size:12px;color:#4a9a2f;">&amp;</span>
<span class="t md" style="left:1281.22px;top:894px;font-size:12px;color:#000;"> {</span>
<span class="t md" style="left:1242.40px;top:912px;font-size:12px;color:#237893;">2</span>
<span class="t md" style="left:1274.00px;top:912px;font-size:12px;color:#ff0000;">  padding:</span>
<span class="t md" style="left:1346.24px;top:912px;font-size:12px;color:#000;"> </span>
<span class="t md" style="left:1353.46px;top:912px;font-size:12px;color:#098658;">0</span>
<span class="t md" style="left:1360.69px;top:912px;font-size:12px;color:#000;">;</span>
<span class="t md" style="left:1242.40px;top:930px;font-size:12px;color:#237893;">3</span>
<span class="t md" style="left:1274.00px;top:930px;font-size:12px;color:#ff0000;">  margin:</span>
<span class="t md" style="left:1339.02px;top:930px;font-size:12px;color:#000;"> </span>
<span class="t md" style="left:1346.24px;top:930px;font-size:12px;color:#098658;">0</span>
<span class="t md" style="left:1353.46px;top:930px;font-size:12px;color:#000;">;</span>
<span class="t md" style="left:1242.40px;top:948px;font-size:12px;color:#237893;">4</span>
<span class="t md" style="left:1274.00px;top:948px;font-size:12px;color:#000;">}</span>
</body></html>
